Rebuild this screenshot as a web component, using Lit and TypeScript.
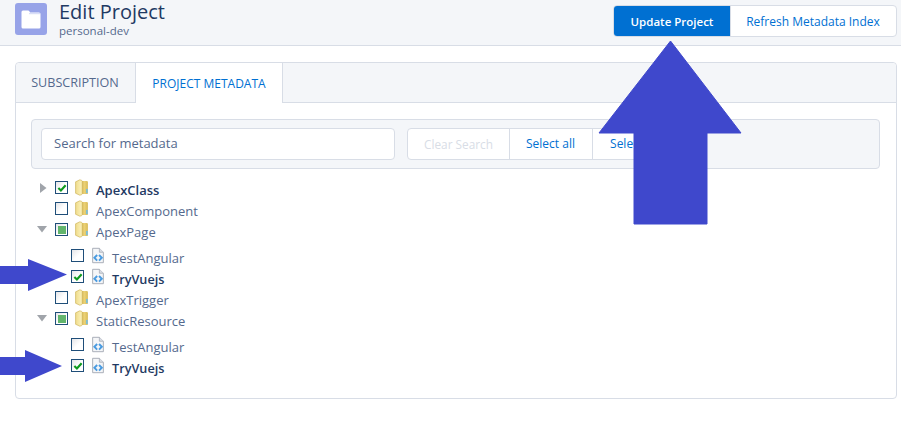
import { LitElement, html, css, svg } from "lit";
import { customElement } from "lit/decorators.js";

type Row = { label: string; kind: "folder" | "file"; check: "on" | "off" | "mixed"; bold?: boolean; arrow?: "right" | "down"; child?: boolean };

const ROWS: Row[][] = [
  [{ label: "ApexClass", kind: "folder", check: "on", bold: true, arrow: "right" }],
  [{ label: "ApexComponent", kind: "folder", check: "off" }],
  [
    { label: "ApexPage", kind: "folder", check: "mixed", arrow: "down" },
    { label: "TestAngular", kind: "file", check: "off", child: true },
    { label: "TryVuejs", kind: "file", check: "on", bold: true, child: true },
  ],
  [{ label: "ApexTrigger", kind: "folder", check: "off" }],
  [
    { label: "StaticResource", kind: "folder", check: "mixed", arrow: "down" },
    { label: "TestAngular", kind: "file", check: "off", child: true },
    { label: "TryVuejs", kind: "file", check: "on", bold: true, child: true },
  ],
];

const folder = svg`<svg class="ico" width="13" height="17" viewBox="0 0 13.8 17">
  <defs>
    <linearGradient id="fr" x1="0" x2="1" y1="0" y2="0"><stop offset="0" stop-color="#c9a83f"/><stop offset="0.5" stop-color="#ecd276"/><stop offset="1" stop-color="#d8bb58"/></linearGradient>
    <linearGradient id="fl" x1="0" x2="1" y1="0" y2="0"><stop offset="0" stop-color="#f0dc8a"/><stop offset="1" stop-color="#fbf3c0"/></linearGradient>
  </defs>
  <path d="M6 1.5 H12.5 Q13.7 1.5 13.7 3 V14.5 Q13.7 15.5 12.5 15.5 H6 Z" fill="url(#fr)"/>
  <path d="M.6 2.5 L5 .4 Q7.6 .4 7.6 2 V15 Q7.6 16.6 5 16.6 L.6 14.6 Z" fill="url(#fl)" stroke="#cdb259" stroke-width=".7"/>
  <rect x="11.8" y="10" width="1.7" height="4.5" fill="#6fbde6"/>
</svg>`;

const file = svg`<svg class="ico" width="12" height="17" viewBox="0 0 13 17">
  <path d="M.7 .7 H8 L12.3 5 V16.3 H.7 Z" fill="#f5f6f8" stroke="#a4a9b3" stroke-width="1"/>
  <path d="M8 .7 V5 H12.3" fill="#d9dde5" stroke="#a4a9b3" stroke-width=".8"/>
  <path d="M5.6 8 L2.6 11 L5.6 14 M7.6 8 L10.6 11 L7.6 14" fill="none" stroke="#4a9be0" stroke-width="2.1"/>
</svg>`;

@customElement("app-root")
export class AppRoot extends LitElement {
  static styles = css`
    :host { display: block; position: relative; width: 901px; height: 445px; overflow: hidden; background: #fff;
      font-family: "Open Sans", "Noto Sans", sans-serif; font-size: 12px; color: #16325c; }
    * { box-sizing: border-box; }
    .head { height: 46px; background: #f4f6f9; border-bottom: 1px solid #d8dde6; display: flex; justify-content: space-between; padding: 3px 4px 0 15px; }
    .title-wrap { display: flex; gap: 12px; }
    .logo { width: 32px; height: 32px; border-radius: 3px; background: #97a3e8; display: flex; align-items: center; justify-content: center; }
    .titles { display: flex; flex-direction: column; margin-top: -3px; }
    .title { font-size: 20px; line-height: 24px; font-weight: 400; color: #1f3a63; }
    .sub { font-size: 11.5px; line-height: 14px; color: #54698d; }
    .group { display: inline-flex; border: 1px solid #d8dde6; border-radius: 4px; background: #fff; overflow: hidden; }
    .group span { display: flex; align-items: center; justify-content: center; color: #0070d2; border-left: 1px solid #d8dde6; white-space: nowrap; }
    .group span:first-child { border-left: 0; }
    .head-actions { margin-top: 2px; height: 32px; }
    .head-actions .primary { width: 116px; background: #0070d2; color: #fff; font-weight: 600; font-size: 11.5px; }
    .head-actions .second { width: 166px; padding-right: 1px; }
    .card { margin: 16px 4px 0 15px; height: 337px; border: 1px solid #d8dde6; border-radius: 4px; }
    .tabs { display: flex; height: 40px; background: #f4f6f9; border-bottom: 1px solid #d8dde6; border-radius: 4px 4px 0 0; }
    .tab { display: flex; align-items: center; justify-content: center; color: #54698d; }
    .tab.one { width: 119px; font-size: 12.6px; padding-right: 1px; }
    .tab.two { width: 148px; height: 40px; background: #fff; color: #0070d2; border: 1px solid #d8dde6; border-width: 0 1px; }
    .bar { margin: 16px 16px 0 15px; height: 50px; background: #f4f6f9; border: 1px solid #d8dde6; border-radius: 4px; display: flex; align-items: center; padding: 0 9px; gap: 12px; }
    .search { width: 354px; height: 32px; background: #fff; border: 1px solid #d8dde6; border-radius: 4px; color: #54698d; font-size: 13px; display: flex; align-items: center; padding: 0 12px 2px; }
    .bar .group { height: 32px; }
    .clear { width: 101px; color: #d8dde6 !important; padding-bottom: 1px; font-size: 11.8px; }
    .all { width: 83px; padding-bottom: 1px; padding-right: 1px; }
    .none { width: 100px; padding-bottom: 1px; }
    .tree { margin: 10px 0 0 24px; }
    .row { display: flex; align-items: center; height: 21px; font-size: 13px; color: #54698d; }
    .row.child { padding-left: 16px; }
    .row.parent-open { margin-bottom: 5px; }
    .exp { width: 15px; display: flex; justify-content: flex-start; margin-top: -4px; }
    .exp .down { margin-left: -3px; }
    .box { width: 13px; height: 13px; border: 1.5px solid #1f4e79; background: linear-gradient(135deg, #e4e5e8 0%, #fff 55%); margin: -4px 7px 0 0; display: flex; align-items: center; justify-content: center; }
    .row.child .box { margin-right: 8px; }
    .lbl { margin-left: 8px; }
    .row.bold .lbl { font-weight: 600; color: #1f3a63; }
    .row.child.bold .lbl { font-size: 12.7px; }
    .ico { flex: none; display: block; margin-top: -4px; }
    .box svg { flex: none; }
    .over { position: absolute; left: 0; top: 0; pointer-events: none; }
  `;

  private check(c: Row["check"]) {
    if (c === "on")
      return svg`<svg width="10" height="10" viewBox="0 0 11 11"><path d="M1.5 5.5 L4.3 8.2 L9.5 2.5" fill="none" stroke="#0e9a1f" stroke-width="2.4"/></svg>`;
    if (c === "mixed")
      return svg`<svg width="8" height="8" viewBox="0 0 8 8"><rect width="8" height="8" fill="#62b56c"/></svg>`;
    return "";
  }

  private exp(a?: Row["arrow"]) {
    if (a === "right")
      return svg`<svg width="7" height="10" viewBox="0 0 7 10"><path d="M0 0 L6.5 5 L0 10 Z" fill="#a0a4aa"/></svg>`;
    if (a === "down")
      return svg`<svg class="down" width="10" height="7" viewBox="0 0 10 7"><path d="M0 0 H10 L5 6.5 Z" fill="#a0a4aa"/></svg>`;
    return "";
  }

  private row(r: Row, open: boolean) {
    return html`<div class="row ${r.child ? "child" : ""} ${r.bold ? "bold" : ""} ${open ? "parent-open" : ""}">
      <span class="exp">${r.child ? "" : this.exp(r.arrow)}</span>
      <span class="box">${this.check(r.check)}</span>
      ${r.kind === "folder" ? folder : file}
      <span class="lbl">${r.label}</span>
    </div>`;
  }

  render() {
    return html`
      <div class="head">
        <div class="title-wrap">
          <div class="logo">
            <svg width="20" height="19" viewBox="0 0 20 19">
              <path d="M.5 2 Q.5 .5 2 .5 H7 Q8 .5 8.5 1.5 L9 2.5 H18 Q19.5 2.5 19.5 4 V17 Q19.5 18.5 18 18.5 H2 Q.5 18.5 .5 17 Z" fill="#fff"/>
              <path d="M8 3.7 H19.5" stroke="#c4ccf2" stroke-width=".8"/>
            </svg>
          </div>
          <div class="titles">
            <div class="title">Edit Project</div>
            <div class="sub">personal-dev</div>
          </div>
        </div>
        <div class="group head-actions">
          <span class="primary">Update Project</span>
          <span class="second">Refresh Metadata Index</span>
        </div>
      </div>
      <div class="card">
        <div class="tabs">
          <div class="tab one">SUBSCRIPTION</div>
          <div class="tab two">PROJECT METADATA</div>
        </div>
        <div class="bar">
          <div class="search">Search for metadata</div>
          <div class="group">
            <span class="clear">Clear Search</span>
            <span class="all">Select all</span>
            <span class="none">Select none</span>
          </div>
        </div>
        <div class="tree">
          ${ROWS.map((g) => g.map((r, i) => this.row(r, i === 0 && g.length > 1)))}
        </div>
      </div>
      <svg class="over" width="901" height="445" viewBox="0 0 901 445">
        <path d="M670.5 41 L741 133 H707 V224 H634 V133 H599 Z" fill="#3f48cc" stroke="#3f48cc" stroke-width="1" stroke-linejoin="round"/>
        <path d="M0 266 H28 V259 L67 274.5 L28 291 V284 H0 Z" fill="#3f48cc"/>
        <path d="M0 357 H25 V350 L62 366 L25 382 V375 H0 Z" fill="#3f48cc"/>
      </svg>
    `;
  }
}
